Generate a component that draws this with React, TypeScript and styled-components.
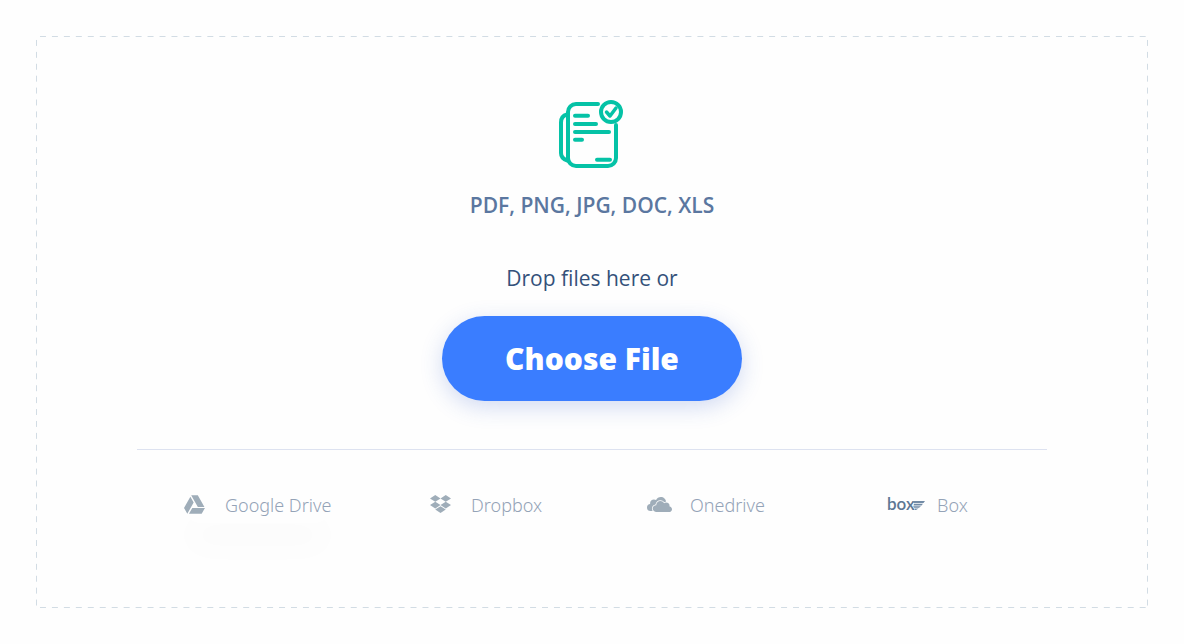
import React from "react";
import styled, { createGlobalStyle } from "styled-components";

const GlobalStyle = createGlobalStyle`
  *, *::before, *::after { box-sizing: border-box; }
  body {
    margin: 0;
    background: #fefefe;
    font-family: "Open Sans", "Noto Sans", sans-serif;
  }
`;

const Page = styled.main`
  padding: 36px;
`;

/* The outline is painted with gradients so that dashes are 6px long and 6px apart. */
const dashX = "linear-gradient(90deg, transparent 4px, #d2dce4 4px 10px, transparent 10px)";
const dashY = "linear-gradient(180deg, transparent 4px, #d2dce4 4px 10px, transparent 10px)";

const DropZone = styled.section`
  display: flex;
  flex-direction: column;
  align-items: center;
  padding: 64px 101px 85px;
  background:
    ${dashX} top left / 12px 1px round no-repeat,
    ${dashX} bottom left / 12px 1px round no-repeat,
    ${dashY} top left / 1px 12px no-repeat round,
    ${dashY} top right / 1px 12px no-repeat round;
`;

const Caption = styled.p`
  margin: 0;
  font-family: "Open Sans", "Noto Sans", sans-serif;
  font-size: 21px;
  line-height: 36px;
`;

const Formats = styled(Caption)`
  margin-top: 19px;
  font-weight: 600;
  color: #5b77a0;
`;

const Hint = styled(Caption)`
  margin-top: 37px;
  color: #34517a;
`;

const ChooseButton = styled.button`
  width: 300px;
  max-width: 100%;
  height: 85px;
  margin-top: 20px;
  padding: 0;
  border: 0;
  border-radius: 43px;
  background: #3a7dff;
  color: #fff;
  font-family: "Open Sans", sans-serif;
  font-size: 30px;
  font-weight: 800;
  cursor: pointer;
  box-shadow: 0 6px 22px rgba(50, 90, 200, 0.22);
`;

const Divider = styled.hr`
  width: 100%;
  height: 1px;
  margin: 48px 0 0;
  border: 0;
  background: #dde2f0;
`;

const Services = styled.nav`
  display: grid;
  grid-template-columns: 246fr 217fr 240fr 160fr;
  width: 100%;
  margin-top: 37px;
  padding-left: 47px;
`;

const Service = styled.a<{ $gap: number; $glow?: boolean }>`
  display: flex;
  align-items: center;
  justify-self: start;
  gap: ${(p) => p.$gap}px;
  height: 36px;
  border-radius: 18px;
  color: #94a3b7;
  font-family: "Noto Sans", sans-serif;
  font-size: 18px;
  font-weight: 300;
  text-decoration: none;
  white-space: nowrap;
  box-shadow: ${(p) => (p.$glow ? "0 30px 30px rgba(60, 60, 90, 0.01)" : "none")};
`;

const ServiceIcon = styled.svg`
  display: block;
  flex: none;
  margin-bottom: 2px;
  fill: #9fadb9;
`;

function DocumentsIcon() {
  return (
    <svg width="66" height="68" viewBox="0 0 66 68" fill="none" stroke="#05c2a6" strokeWidth="4" strokeLinecap="round" strokeLinejoin="round" aria-hidden="true">
      <path d="M39 4H17a8 8 0 0 0-8 8v46a8 8 0 0 0 8 8h32a8 8 0 0 0 8-8V25" />
      <path d="M8 14.500c-4 1-6 4-6 8V53c0 4 2 6 6 7.500" />
      <path d="M16 15.700h13M16 24h21M16 32h34M16 39.800h7M38 59.800h13" />
      <circle cx="52" cy="12" r="10" strokeWidth="4" />
      <path d="M47.500 12l3.500 4 6-8" strokeWidth="3.500" />
    </svg>
  );
}

function DriveIcon() {
  return (
    <ServiceIcon width="21" height="19" viewBox="1.150 2 21.700 19" aria-hidden="true">
      <path d="M7.710 3.500L1.150 15l3.430 6 6.550-11.500L7.710 3.500zM9.730 15L6.300 21h13.120l3.430-6H9.730zM22.280 14L15.420 2H8.580l6.860 12h6.840z" />
    </ServiceIcon>
  );
}

function DropboxIcon() {
  return (
    <ServiceIcon width="21" height="18" viewBox="0 1.800 24 20.400" aria-hidden="true">
      <path d="M6 1.807L0 5.629l6 3.822 6.001-3.822L6 1.807zM18 1.807l-6 3.822 6 3.822 6-3.822-6-3.822zM0 13.274l6 3.822 6.001-3.822L6 9.452l-6 3.822zM18 9.452l-6 3.822 6 3.822 6-3.822-6-3.822zM6 18.371l6.001 3.822 6-3.822-6-3.822L6 18.371z" />
    </ServiceIcon>
  );
}

function OnedriveIcon() {
  return (
    <ServiceIcon width="25" height="15" viewBox="2 6.150 20 11.850" aria-hidden="true">
      <path d="M20.080 13.640C21.170 13.810 22 14.750 22 15.890C22 16.780 21.500 17.550 20.750 17.920L20.580 18H9.180C7.710 18 6.540 16.810 6.540 15.360C6.540 13.900 7.720 12.720 9.180 12.720L9.400 12.730L9.390 12.530A3.300 3.300 0 0 1 12.690 9.230C13.970 9.230 15.080 9.960 15.630 11C16.080 10.730 16.620 10.550 17.210 10.550A2.880 2.880 0 0 1 20.090 13.430L20.080 13.640M8.820 12.160C7.210 12.340 5.960 13.700 5.960 15.360C5.960 16.040 6.170 16.660 6.500 17.180H4.730A2.730 2.730 0 0 1 2 14.450C2 13 3.120 11.830 4.530 11.730L4.460 11.060C4.460 9.360 5.840 8 7.540 8C8.170 8 8.770 8.180 9.260 8.500C9.950 7.110 11.400 6.150 13.070 6.150C15.270 6.150 17.080 7.830 17.300 9.970H17.210C16.730 9.970 16.270 10.070 15.840 10.250C15.120 9.250 13.960 8.640 12.690 8.640C10.670 8.640 9 10.190 8.820 12.160Z" />
    </ServiceIcon>
  );
}

const Wordmark = styled.text`
  font-family: Lato, sans-serif;
  font-size: 17px;
  font-weight: 600;
  fill: #5d7794;
`;

function BoxIcon() {
  return (
    <ServiceIcon width="38" height="24" viewBox="0 -5 38 24" aria-hidden="true">
      <Wordmark x="0" y="13">box</Wordmark>
      <path d="M25.500 4H38L36.500 6H26.500zM27 6.700H36L34.500 8.500H26.500zM26 9.200H34L32 10.800H27zM27.500 11.400H31.500L29 13H28z" fill="#728ba6" />
    </ServiceIcon>
  );
}

export default function App() {
  return (
    <>
      <GlobalStyle />
      <Page>
        <DropZone>
          <DocumentsIcon />
          <Formats>PDF, PNG, JPG, DOC, XLS</Formats>
          <Hint>Drop files here or</Hint>
          <ChooseButton type="button">Choose File</ChooseButton>
          <Divider />
          <Services aria-label="Cloud storage">
            <Service href="#google-drive" $gap={20} $glow>
              <DriveIcon />
              Google Drive
            </Service>
            <Service href="#dropbox" $gap={20}>
              <DropboxIcon />
              Dropbox
            </Service>
            <Service href="#onedrive" $gap={18}>
              <OnedriveIcon />
              Onedrive
            </Service>
            <Service href="#box" $gap={12}>
              <BoxIcon />
              Box
            </Service>
          </Services>
        </DropZone>
      </Page>
    </>
  );
}
